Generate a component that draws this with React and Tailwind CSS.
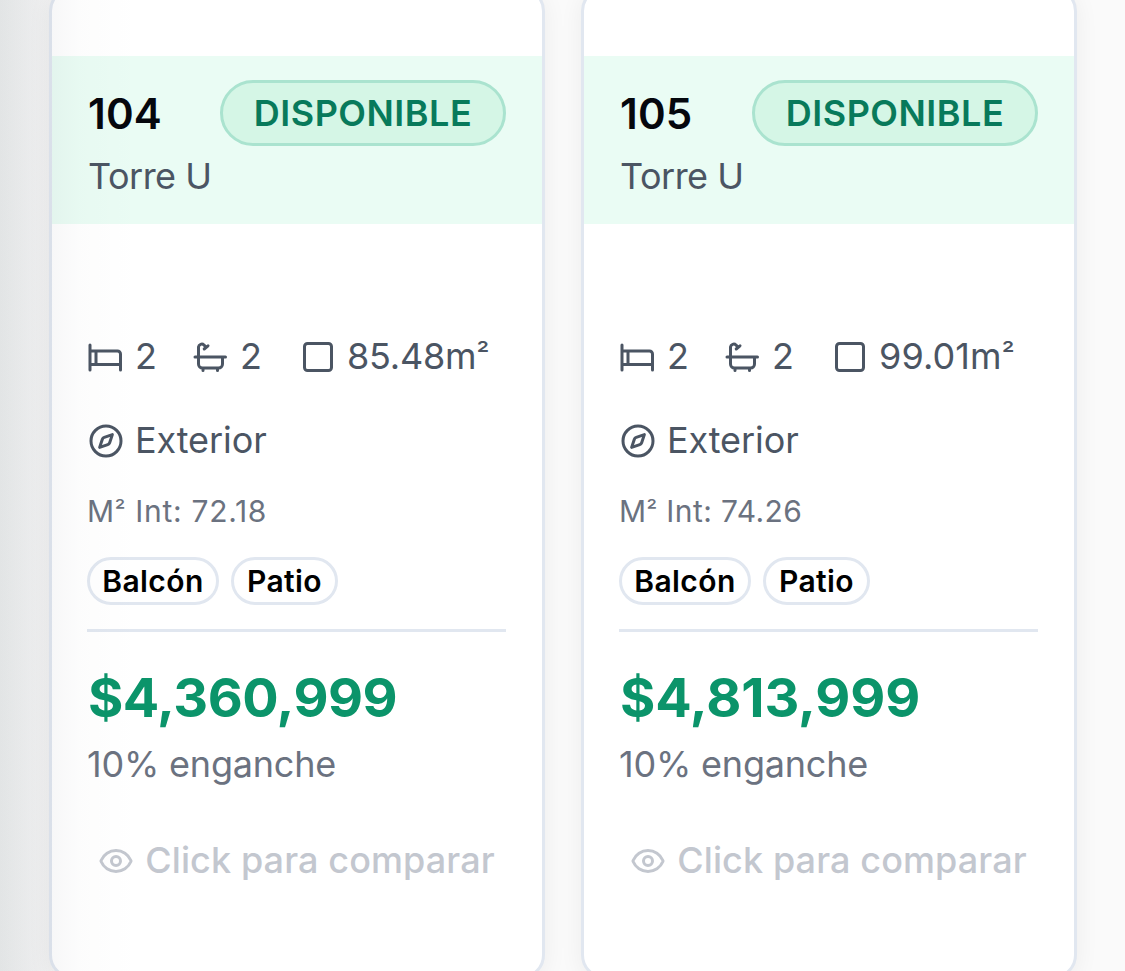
import React from "react";
import { Eye, Compass, Square } from "lucide-react";

const units = [
  { id: "104", area: "85.48", areaTracking: "tracking-[-0.2px]", inner: "72.18", innerTracking: "tracking-[0.7px]", price: "$4,360,999", priceTracking: "tracking-[-0.5px]" },
  { id: "105", area: "99.01", areaTracking: "tracking-[0.1px]", inner: "74.26", innerTracking: "tracking-[0.4px]", price: "$4,813,999", priceTracking: "tracking-[-0.1px]" },
];

const stroke = {
  fill: "none",
  stroke: "currentColor",
  strokeWidth: 3,
  strokeLinecap: "round",
  strokeLinejoin: "round",
};

function Bed() {
  return (
    <svg viewBox="0 0 36 36" className="ml-px size-9 shrink-0" {...stroke}>
      <path d="M2 6v25M2 12h27.500a3 3 0 0 1 3 3v16M2 25.500h30.500M8 12v13.500" />
    </svg>
  );
}

function Bath() {
  return (
    <svg viewBox="0 0 36 36" className="ml-px size-9 shrink-0" {...stroke}>
      <path d="M2 18h30.500M15 6.800l-3.800 3.200M10 29v2.500M24.500 29v2.500M12.800 8l-1.800-2A3.300 3.300 0 0 0 5.500 8v17a4 4 0 0 0 4 4h16a4 4 0 0 0 4-4v-7" />
    </svg>
  );
}

function Card({ unit }) {
  return (
    <article className="-mt-[13px] h-[992px] w-[496px] shrink-0 overflow-hidden rounded-[24px] border-[3px] border-[#e1e7f0] bg-white shadow-[0_4px_24px_rgba(10,10,30,0.06)]">
      <header className="mt-[66px] h-[168px] bg-[#eafcf4] px-9 pt-6">
        <div className="flex h-[66px] items-center justify-between">
          <span className="pt-px text-[42px] font-semibold tracking-[0.2px] text-[#05070d]">{unit.id}</span>
          <span className="flex h-[66px] w-[286px] items-center justify-center rounded-full border-[3px] border-[#aae3cf] bg-[#d5f6e6] pb-px text-[36px] font-semibold tracking-[0.5px] text-[#087a5b]">DISPONIBLE</span>
        </div>
        <p className="mt-[3px] text-[36px] leading-[54px] tracking-[-0.5px] text-[#4b5563]">Torre U</p>
      </header>
      <div className="pt-[106px] pr-9 pl-[35px] text-[#4b5563]">
        <div className="flex h-[54px] items-center text-[36px]">
          <span className="flex w-[105px] items-center gap-[11px]"><Bed /><span className="-mt-[3px]">2</span></span>
          <span className="flex w-[108px] items-center gap-[11px]"><Bath /><span className="-mt-[3px]">2</span></span>
          <span className="flex items-center gap-[11px]">
            <Square className="size-9" />
            <span className={`-mt-[3px] ${unit.areaTracking}`}>{unit.area}m<span className="align-[4px] text-[29px] leading-none">²</span></span>
          </span>
        </div>
        <div className="mt-[30px] flex h-[54px] items-center gap-[11px] text-[36px]"><Compass className="ml-px size-9" /><span className="-mt-[3px] tracking-[-0.1px]">Exterior</span></div>
        <p className={`mt-[19px] text-[30px] leading-[48px] text-[#6b7280] ${unit.innerTracking}`}>M<span className="align-[3px] text-[24px] leading-none">²</span> Int: {unit.inner}</p>
        <div className="mt-[22px] flex h-12 gap-3 text-[30px] font-semibold tracking-[0.4px] text-black">
          <span className="flex w-[132px] items-center justify-center rounded-full border-[3px] border-[#e1e7f0]">Balcón</span>
          <span className="flex w-[107px] items-center justify-center rounded-full border-[3px] border-[#e1e7f0]">Patio</span>
        </div>
        <div className="mt-6 border-t-[3px] border-[#e1e7f0] pt-[30px]">
          <p className={`pl-px text-[54px] leading-[72px] font-bold text-[#0b946a] ${unit.priceTracking}`}>{unit.price}</p>
          <p className="text-[36px] leading-[60px] tracking-[-0.2px] text-[#6b7280]">10% enganche</p>
        </div>
        <div className="mt-[37px] flex h-[60px] items-center justify-center gap-[11px] text-[36px] font-medium tracking-[0.1px] text-[#c3c7cf]"><Eye className="size-9" /><span className="-mt-[3px]">Click para comparar</span></div>
      </div>
    </article>
  );
}

export default function App() {
  return (
    <main className="relative flex h-[971px] gap-9 overflow-hidden bg-[#fafafa] bg-[linear-gradient(90deg,#f3f4f4_0px,#f8f8f8_50px,#fafafa_60px)] pl-[49px] font-[Inter,sans-serif] leading-none">
      {units.map((unit) => <Card key={unit.id} unit={unit} />)}
      <div className="pointer-events-none absolute inset-y-0 left-0 w-[140px] bg-[linear-gradient(90deg,rgba(15,35,45,0.075)_0px,rgba(15,20,40,0.035)_48px,rgba(15,20,40,0.012)_80px,rgba(15,20,40,0)_140px)]" />
    </main>
  );
}
